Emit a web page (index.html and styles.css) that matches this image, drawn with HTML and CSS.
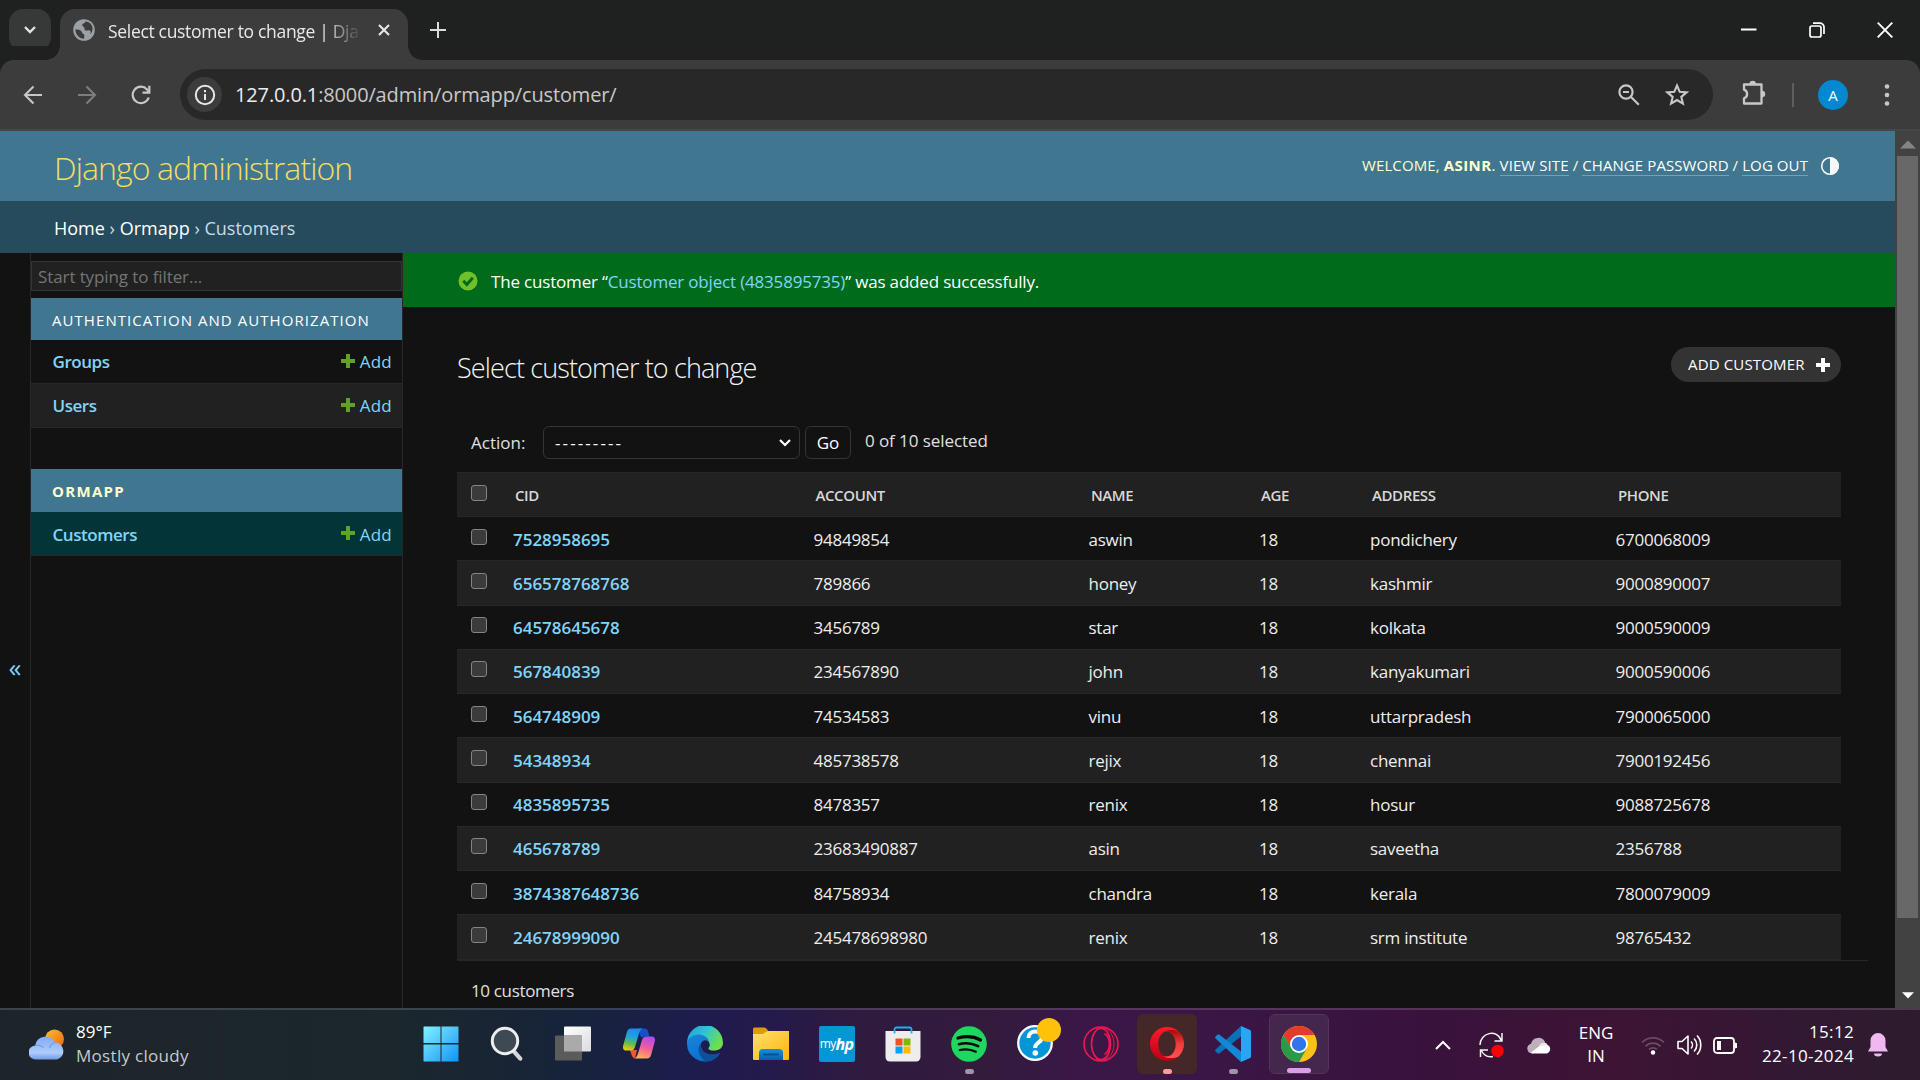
FILE: index.html
```
<!DOCTYPE html>
<html lang="en">
<head>
<meta charset="utf-8">
<title>Select customer to change | Django site admin</title>
<link rel="stylesheet" href="styles.css">
</head>
<body>
<div class="screen">
  <header class="tabstrip">
    <button class="tab-search"><svg width="14" height="10" viewBox="0 0 14 10"><path d="M2 2l5 5 5-5" fill="none" stroke="#e3e3e3" stroke-width="2.4"/></svg></button>
    <div class="tab">
      <svg class="globe" width="22" height="22" viewBox="0 0 22 22"><circle cx="11" cy="11" r="10.8" fill="#9aa0a6"/><path d="M2.4 10.5c2.400 0 4.400.3 5.600 1.300 1.300 1.200.7 2.600 2.200 3.100 1.500.4 1.200 1.700.8 4.800C6.500 19.600 2.500 16 2.400 10.500zM12.500 2.500c-.4 2-2.600 1.700-3.200 3-.5 1.400 1 1.700 1.900 2.900.7 1.100-.2 2.500 1.300 3 1.500.6 2.700-.4 4.200 0 1.400.5 1.100 1.900.5 3.700 2-1.700 2.700-4.600 2.200-7.200-.9-3-3.500-5.300-6.900-5.400z" fill="#3c3c3c"/></svg>
      <span class="tab-title">Select customer to change | Dja</span>
      <svg width="12" height="12" viewBox="0 0 12 12"><path d="M1 1l10 10M11 1L1 11" stroke="#e8e8e8" stroke-width="2.100"/></svg>
    </div>
    <svg class="new-tab" width="16" height="16" viewBox="0 0 16 16"><path d="M8 0v16M0 8h16" stroke="#dcdcdc" stroke-width="2"/></svg>
    <div class="window-controls">
      <svg width="16" height="16" viewBox="0 0 16 16"><path d="M0 7.500h15.500" stroke="#fff" stroke-width="2"/></svg>
      <svg width="16" height="16" viewBox="0 0 16 16" fill="none" stroke="#fff" stroke-width="1.700"><rect x="1" y="4" width="11" height="11" rx="2"/><path d="M4 1.200h7a4 4 0 0 1 4 4V12"/></svg>
      <svg width="16" height="16" viewBox="0 0 16 16"><path d="M.7.7l14.600 14.600M15.300.7L.7 15.300" stroke="#fff" stroke-width="1.900"/></svg>
    </div>
  </header>

  <div class="toolbar">
    <svg class="back" width="20" height="20" viewBox="0 0 20 20" fill="none" stroke="#c7c7c7" stroke-width="2.100"><path d="M19 10H2.500M10.500 1.500L2 10l8.500 8.500"/></svg>
    <svg class="forward" width="20" height="20" viewBox="0 0 20 20" fill="none" stroke="#7d7d7d" stroke-width="2.100"><path d="M1 10h16.500M9.500 1.500L18 10l-8.500 8.500"/></svg>
    <svg class="reload" width="20" height="20" viewBox="0 0 20 20" fill="none" stroke="#c7c7c7" stroke-width="2.200"><path d="M17.700 12.500A8.200 8.200 0 1 1 16 4.400l2.200 2.800"/><path d="M18.300.8v6.800h-6.800"/></svg>
    <div class="omnibox">
      <span class="site-info"><svg width="22" height="22" viewBox="0 0 22 22"><circle cx="11" cy="11" r="9.200" fill="none" stroke="#e6e6e6" stroke-width="2"/><path d="M11 10v6M11 6v2.200" stroke="#e6e6e6" stroke-width="2"/></svg></span>
      <span class="url"><b>127.0.0.1</b>:8000/admin/ormapp/customer/</span>
      <svg class="zoom" width="22" height="22" viewBox="0 0 22 22" fill="none" stroke="#c7c7c7" stroke-width="2.200"><circle cx="8" cy="8" r="6.600"/><path d="M12.800 12.800l8 8M5 8h6"/></svg>
      <svg class="star" width="24" height="23" viewBox="0 0 24 23"><path d="M12 2.500l2.700 6.300 6.800.6-5.200 4.500 1.600 6.700-5.900-3.600-5.900 3.600 1.600-6.700-5.200-4.500 6.800-.6z" fill="none" stroke="#c7c7c7" stroke-width="2.100"/></svg>
    </div>
    <svg class="puzzle" width="26" height="26" viewBox="0 0 26 26"><path d="M3 4.500h17.500V23.500H3v-5.200a4.600 4.600 0 0 0 0-8.700z" fill="none" stroke="#c7c7c7" stroke-width="2.300" stroke-linejoin="round"/><path d="M8.500 4a3.200 3.200 0 0 1 6.400 0zM21 10.800a3.200 3.200 0 0 1 0 6.400z" fill="#c7c7c7"/></svg>
    <span class="divider"></span>
    <span class="avatar">A</span>
    <svg class="menu" width="6" height="26" viewBox="0 0 6 26" fill="#c7c7c7"><circle cx="3" cy="4.500" r="2.300"/><circle cx="3" cy="13" r="2.300"/><circle cx="3" cy="21.500" r="2.300"/></svg>
  </div>

  <div class="viewport">
    <div class="admin">
      <div class="admin-header">
        <h1 class="site-name">Django administration</h1>
        <div class="user-tools"><span>WELCOME, <strong>ASINR</strong>. <a>VIEW SITE</a> / <a>CHANGE PASSWORD</a> / <a>LOG OUT</a></span>
          <svg width="20" height="20" viewBox="0 0 20 20"><circle cx="10" cy="10" r="8.300" fill="none" stroke="#f7f7f7" stroke-width="1.600"/><path d="M10 1a9 9 0 0 1 0 18z" fill="#f7f7f7"/></svg>
        </div>
      </div>
      <nav class="breadcrumbs"><a>Home</a> › <a>Ormapp</a> › Customers</nav>
      <div class="main">
        <button class="sidebar-toggle">«</button>
        <aside class="sidebar">
          <input class="filter" placeholder="Start typing to filter…">
          <div class="module">
            <div class="caption">AUTHENTICATION AND AUTHORIZATION</div>
            <div class="model"><b>Groups</b><a><svg class="plus" width="14" height="14" viewBox="0 0 14 14"><path d="M5 0h4v5h5v4H9v5H5V9H0V5h5z"/></svg>Add</a></div>
            <div class="model alt"><b>Users</b><a><svg class="plus" width="14" height="14" viewBox="0 0 14 14"><path d="M5 0h4v5h5v4H9v5H5V9H0V5h5z"/></svg>Add</a></div>
          </div>
          <div class="module">
            <div class="caption current">ORMAPP</div>
            <div class="model current"><b>Customers</b><a><svg class="plus" width="14" height="14" viewBox="0 0 14 14"><path d="M5 0h4v5h5v4H9v5H5V9H0V5h5z"/></svg>Add</a></div>
          </div>
        </aside>
        <section class="content">
          <div class="message">
            <svg width="20" height="20" viewBox="0 0 20 20"><circle cx="10" cy="10" r="9.500" fill="#70bf2b"/><path d="M5.300 9.700l3.500 3.800 6-6.800" fill="none" stroke="#006b1b" stroke-width="2.900"/></svg>
            <span>The customer “<a>Customer object (4835895735)</a>” was added successfully.</span>
          </div>
          <div class="title-row">
            <h2>Select customer to change</h2>
            <a class="add-button">ADD CUSTOMER<svg width="14" height="14" viewBox="0 0 14 14"><path d="M5 0h4v5h5v4H9v5H5V9H0V5h5z" fill="#fff"/></svg></a>
          </div>
          <div class="actions">
            <label>Action:</label>
            <span class="select">---------<svg width="12" height="8" viewBox="0 0 12 8"><path d="M1 1l5 5 5-5" fill="none" stroke="#fff" stroke-width="2.200"/></svg></span>
            <button class="go">Go</button>
            <span class="counter">0 of 10 selected</span>
          </div>
          <div class="table">
            <div class="row head"><i class="check"></i><span>CID</span><span>ACCOUNT</span><span>NAME</span><span>AGE</span><span>ADDRESS</span><span>PHONE</span></div>
            <div class="row"><i class="check"></i><a>7528958695</a><span>94849854</span><span>aswin</span><span>18</span><span>pondichery</span><span>6700068009</span></div>
            <div class="row"><i class="check"></i><a>656578768768</a><span>789866</span><span>honey</span><span>18</span><span>kashmir</span><span>9000890007</span></div>
            <div class="row"><i class="check"></i><a>64578645678</a><span>3456789</span><span>star</span><span>18</span><span>kolkata</span><span>9000590009</span></div>
            <div class="row"><i class="check"></i><a>567840839</a><span>234567890</span><span>john</span><span>18</span><span>kanyakumari</span><span>9000590006</span></div>
            <div class="row"><i class="check"></i><a>564748909</a><span>74534583</span><span>vinu</span><span>18</span><span>uttarpradesh</span><span>7900065000</span></div>
            <div class="row"><i class="check"></i><a>54348934</a><span>485738578</span><span>rejix</span><span>18</span><span>chennai</span><span>7900192456</span></div>
            <div class="row"><i class="check"></i><a>4835895735</a><span>8478357</span><span>renix</span><span>18</span><span>hosur</span><span>9088725678</span></div>
            <div class="row"><i class="check"></i><a>465678789</a><span>23683490887</span><span>asin</span><span>18</span><span>saveetha</span><span>2356788</span></div>
            <div class="row"><i class="check"></i><a>3874387648736</a><span>84758934</span><span>chandra</span><span>18</span><span>kerala</span><span>7800079009</span></div>
            <div class="row"><i class="check"></i><a>24678999090</a><span>245478698980</span><span>renix</span><span>18</span><span>srm institute</span><span>98765432</span></div>
          </div>
          <div class="paginator">10 customers</div>
        </section>
      </div>
    </div>
    <div class="scrollbar">
      <svg width="16" height="9" viewBox="0 0 16 9"><path d="M0 8.500L8 .5l8 8z" fill="#858585"/></svg>
      <span class="thumb"></span>
      <svg class="down" width="12" height="7" viewBox="0 0 12 7"><path d="M0 .3h12L6 6.600z" fill="#fff"/></svg>
    </div>
  </div>

  <footer class="taskbar">
    <div class="weather">
      <svg width="36" height="32" viewBox="0 0 36 32"><defs><linearGradient id="sun" x1="0" y1="0" x2="1" y2="1"><stop offset="0" stop-color="#f8bd32"/><stop offset="1" stop-color="#f0660c"/></linearGradient><linearGradient id="cloud" x1="0" y1="0" x2="0" y2="1"><stop offset="0" stop-color="#83a9f2"/><stop offset=".7" stop-color="#aecdfa"/><stop offset="1" stop-color="#6f9bea"/></linearGradient></defs><circle cx="25.500" cy="10" r="9.500" fill="url(#sun)"/><path d="M7 30.500a7 7 0 0 1-.8-14A10.500 10.500 0 0 1 26 13.600a8.600 8.600 0 0 1 2 16.900z" fill="url(#cloud)"/><path d="M6.500 16.500c3-.8 6 .2 8 2.200M20.500 19c1-3.500 3-5.200 6-5.500" fill="none" stroke="#7499e2" stroke-width="1.200"/></svg>
      <div class="stack"><span>89°F</span><span class="muted">Mostly cloudy</span></div>
    </div>
    <div class="apps">
      <div class="app"><svg width="36" height="36" viewBox="0 0 36 36"><defs><linearGradient id="win" gradientUnits="userSpaceOnUse" x1="0" y1="0" x2="36" y2="36"><stop offset="0" stop-color="#80f4ff"/><stop offset=".5" stop-color="#4cc2fb"/><stop offset="1" stop-color="#0a93f8"/></linearGradient></defs><path d="M1 .5h16.500V17H.5V1zM18.500.5H35l.5.5v16h-17zM.5 18.500h17v17H1l-.5-.5zM18.500 18.500h17V35l-.5.5H18.500z" fill="url(#win)"/></svg></div>
      <div class="app"><svg width="36" height="36" viewBox="0 0 36 36"><path d="M24.500 25l6.800 7.600" stroke="#d3d5d8" stroke-width="4.200" stroke-linecap="round"/><circle cx="16" cy="15" r="12.700" fill="#3d4953" stroke="#eceeef" stroke-width="3"/></svg></div>
      <div class="app"><svg width="36" height="36" viewBox="0 0 36 36"><defs><linearGradient id="tv" x1="0" y1="0" x2="1" y2="1"><stop offset="0" stop-color="#fff"/><stop offset="1" stop-color="#dcdcdc"/></linearGradient></defs><rect x="9" y=".5" width="27" height="25" rx="1" fill="url(#tv)"/><rect y="9.500" width="27" height="25" rx="1" fill="#5b5b5b"/><path d="M9 9.500h18v16H9z" fill="#aaa"/></svg></div>
      <div class="app"><svg width="36" height="36" viewBox="0 0 36 36"><defs><linearGradient id="cpa" x1=".3" y1="0" x2=".1" y2="1"><stop offset="0" stop-color="#1d8cf0"/><stop offset=".35" stop-color="#20a5d8"/><stop offset=".65" stop-color="#67b84d"/><stop offset="1" stop-color="#ffd000"/></linearGradient><linearGradient id="cpb" x1=".7" y1="0" x2=".4" y2="1"><stop offset="0" stop-color="#a94df3"/><stop offset=".5" stop-color="#ee5c9d"/><stop offset="1" stop-color="#ffad55"/></linearGradient></defs><path d="M17 2.500h6.500c2 0 3 1 3.600 3l1.300 5H23l-3 1z" fill="#1551c8"/><path d="M9 24h7l-2 8.500c-2-.5-3-2-3.500-4z" fill="#f4552f"/><path d="M10 2.500h11.500c-2 1-3 3-3.800 6L14 21c-.8 2.500-2 3.500-4.500 3.500h-4c-3 0-4-2-3.300-5L5.800 6.500C6.500 4 7.700 2.500 10 2.500z" fill="url(#cpa)"/><path d="M26 32.500H13.500c2-1 3-3 3.800-6L21 14c.8-2.500 2-3.500 4.500-3.500h5c3 0 4 2 3.300 5l-3.600 13c-.7 2.500-1.900 4-4.200 4z" fill="url(#cpb)"/></svg></div>
      <div class="app"><svg width="36" height="36" viewBox="0 0 36 36"><defs><linearGradient id="ea" x1="0" y1="0" x2="1" y2=".5"><stop offset="0" stop-color="#209ad8"/><stop offset=".5" stop-color="#2fc3d6"/><stop offset="1" stop-color="#6fe04a"/></linearGradient><linearGradient id="eb" x1="0" y1="0" x2=".5" y2="1"><stop offset="0" stop-color="#1a86d8"/><stop offset="1" stop-color="#0b6fd0"/></linearGradient></defs><path d="M0 17A18 18 0 0 1 36 17c0 5-4 7.500-9 7.500-4 0-6-1-5.500-2.500 2-2 1.500-5-.5-7C17 10 5 10 0 17z" fill="url(#ea)"/><path d="M0 17C1 12 6 8.500 11.500 8.500c6 0 10.500 4 11 8.500-2-4-7.500-3.500-8.500 1-1 6 4 12 13 15A18 18 0 0 1 0 17z" fill="url(#eb)"/><path d="M14 17c-5 6-2 14 5 18.500C26 36 31 31 33 27.500c.3-.8-.3-1-1-.6-7 3-15 1-17.500-4.400-.8-1.800-.9-4-.5-5.500z" fill="#0d509c"/></svg></div>
      <div class="app"><svg width="36" height="36" viewBox="0 0 36 36"><defs><linearGradient id="fo" x1="0" y1="0" x2="1" y2="1"><stop offset="0" stop-color="#ffe06c"/><stop offset="1" stop-color="#fdb50d"/></linearGradient><linearGradient id="fb" x1="0" y1="0" x2="0" y2="1"><stop offset="0" stop-color="#1290e0"/><stop offset="1" stop-color="#0860ac"/></linearGradient></defs><path d="M0 3a1.500 1.500 0 0 1 1.500-1.500H11c1.500 0 2.500 1 4 3L13 8H0z" fill="#dd9c05"/><path d="M0 8h9c3 0 3.500-3 6-3h21v28a1 1 0 0 1-1 1H1a1 1 0 0 1-1-1z" fill="url(#fo)"/><path d="M6 34V27a4 4 0 0 1 4-4h16a4 4 0 0 1 4 4v7z" fill="url(#fb)"/><path d="M11 28.500h14" stroke="#064f91" stroke-width="1.800" stroke-linecap="round"/></svg></div>
      <div class="app"><span class="myhp"><span class="my">my</span><b>hp</b></span></div>
      <div class="app"><svg width="36" height="36" viewBox="0 0 36 36"><path d="M9.500 7V3.500a2 2 0 0 1 2-2h13a2 2 0 0 1 2 2V7" fill="none" stroke="#22aef2" stroke-width="1.800"/><path d="M.5 5h35v26a4.500 4.500 0 0 1-4.500 4.500H5A4.500 4.500 0 0 1 .5 31z" fill="#ededed"/><path d="M9.500 5v2.500M26.500 5v2.500" stroke="#22aef2" stroke-width="1.800"/><path d="M10.500 12.500h7v7h-7z" fill="#f25022"/><path d="M18.500 12.500h7v7h-7z" fill="#7fba00"/><path d="M10.500 20.500h7v7h-7z" fill="#00a4ef"/><path d="M18.500 20.500h7v7h-7z" fill="#ffb900"/></svg></div>
      <div class="app"><svg width="36" height="36" viewBox="0 0 36 36"><circle cx="18" cy="18" r="17.800" fill="#1ed760"/><g fill="none" stroke="#090909" stroke-linecap="round"><path d="M7 12c7.500-2 16-1.500 22.500 2" stroke-width="3.200"/><path d="M8 18.200c6.500-1.700 13.500-.9 19.200 2" stroke-width="2.600"/><path d="M8.800 24c5.500-1.300 11.200-.7 16 1.700" stroke-width="2.200"/></g></svg><i class="dot"></i></div>
      <div class="app"><svg class="help" width="46" height="46" viewBox="0 0 46 46"><circle cx="18" cy="27" r="16.800" fill="#0596d8" stroke="#fff" stroke-width="2.200"/><path d="M11.500 22c0-9 13.500-8.500 13.500-.5 0 5-7 5-7 10.500" fill="none" stroke="#fff" stroke-width="4"/><circle cx="18.300" cy="37" r="2.800" fill="#fff"/><circle cx="32" cy="14" r="12" fill="#ffc20a"/></svg></div>
      <div class="app"><svg width="36" height="36" viewBox="0 0 36 36" fill="none" stroke="#ee174e" stroke-width="1.600"><circle cx="18" cy="18" r="17"/><ellipse cx="18" cy="18" rx="9.500" ry="15.500"/><path d="M21.500 7.500c6.500 4 6.500 17 0 21"/><path d="M13 2.500C24-1 31 8 31 18S24 37 13 33.500" stroke-width="1"/></svg></div>
      <div class="app running-alert"><svg width="36" height="36" viewBox="0 0 36 36"><defs><linearGradient id="oa" x1="0" y1="0" x2="0" y2="1"><stop offset="0" stop-color="#ff1b2d"/><stop offset="1" stop-color="#b80014"/></linearGradient><linearGradient id="ob" x1="0" y1="0" x2="0" y2="1"><stop offset="0" stop-color="#a80808"/><stop offset=".5" stop-color="#ef3d3d"/><stop offset="1" stop-color="#ff5252"/></linearGradient></defs><path fill-rule="evenodd" d="M18 1a17 17 0 1 0 0 34 17 17 0 0 0 0-34zm0 4.500c5 0 8.800 5.500 8.800 12.500S23 30.500 18 30.500 9.200 25 9.200 18 13 5.500 18 5.500z" fill="url(#oa)"/><path d="M13 6.800C17 3.500 24 3 29.500 5.500a17 17 0 0 1 0 25C24 33 17 32.500 13 29.200c7.500 4.500 13.800-2.500 13.800-11.200S20.500 2.300 13 6.800z" fill="url(#ob)"/></svg><i class="dot pink"></i></div>
      <div class="app"><svg width="36" height="36" viewBox="0 0 36 36"><path d="M26 0v10.500L4.500 27.200a1.500 1.500 0 0 1-2 0L.6 25.500a1.400 1.400 0 0 1 0-2z" fill="#0a72b8"/><path d="M26 36V25.500L4.500 8.800a1.500 1.500 0 0 0-2 0L.6 10.500a1.400 1.400 0 0 0 0 2z" fill="#1389d6"/><path d="M26 0l9 4a1.500 1.500 0 0 1 1 1.500v25a1.500 1.500 0 0 1-1 1.500l-9 4z" fill="#27a7f3"/></svg><i class="dot"></i></div>
      <div class="app active"><svg width="36" height="36" viewBox="0 0 36 36"><circle cx="18" cy="18" r="18" fill="#fbc116"/><path d="M2.400 9A18 18 0 0 1 33.600 9H18v9l-8 4.500z" fill="#e33b2e"/><path d="M2.400 9A18 18 0 0 0 18 36l7.800-13.500L18 18l-7.800 4.500z" fill="#2a9a47"/><circle cx="18" cy="18" r="9" fill="#fff"/><circle cx="18" cy="18" r="7.200" fill="#2f76ea"/></svg><i class="dot wide"></i></div>
    </div>
    <div class="tray">
      <svg class="chev" width="16" height="10" viewBox="0 0 16 10"><path d="M1 9l7-7 7 7" fill="none" stroke="#fff" stroke-width="2"/></svg>
      <svg class="sync" width="25" height="26" viewBox="0 0 25 26" fill="none" stroke="#f5f5f5" stroke-width="1.500"><path d="M1 13C1 1 18-4 22.500 9M23 1v8h-7.500M1.500 25v-7h7.500M2 18c2.500 5 7 7.500 12 6.500"/><circle cx="18.500" cy="19" r="6.200" fill="#fe0000" stroke="none"/></svg>
      <svg class="cloud" width="24" height="17" viewBox="0 0 24 17"><path d="M5 16.500A5 5 0 0 1 4 6.700 7.500 7.500 0 0 1 18 5l-2 6z" fill="#bdb0bb"/><path d="M4 15.500L15 7c3-2.500 5-.5 5.500 1A4.500 4.500 0 0 1 19.500 16.500H5z" fill="#fff"/><path d="M12 9.500c1-4 6-5 8-1.500" fill="#e9e4e8"/></svg>
      <div class="stack lang"><span>ENG</span><span>IN</span></div>
      <svg class="wifi" width="24" height="19" viewBox="0 0 24 19" fill="none" stroke="#6c4b63" stroke-width="1.700"><path d="M1 6.500a15.500 15.500 0 0 1 22 0M4.500 10.300a10.500 10.500 0 0 1 15 0M8 13.500a5.800 5.800 0 0 1 8 0"/><circle cx="12" cy="16.500" r="2.200" fill="#fff" stroke="none"/></svg>
      <svg class="volume" width="25" height="22" viewBox="0 0 25 22" fill="none" stroke="#fff" stroke-width="1.600"><path d="M1 7.500h4L11 2v18l-6-5.500H1z" stroke-linejoin="round"/><path d="M14 7.500a5 5 0 0 1 0 7M17 4.500a9 9 0 0 1 0 13M20 1.500c5 5 5 14 0 19"/></svg>
      <svg class="battery" width="24" height="17" viewBox="0 0 24 17"><rect x="1" y="1" width="20" height="15" rx="3" fill="none" stroke="#fff" stroke-width="1.800"/><path d="M4 4h4v9H4z" fill="#fff"/><path d="M22 6a2.500 2.500 0 0 1 0 5z" fill="#fff" stroke="#fff"/></svg>
      <div class="stack clock"><span>15:12</span><span>22-10-2024</span></div>
      <svg class="bell" width="20" height="24" viewBox="0 0 20 24" fill="#efb9f0"><path d="M10 0a7.500 7.500 0 0 1 7.500 7.500V14l2.500 4.500H0L2.500 14V7.500A7.500 7.500 0 0 1 10 0zM6 20.500h8a4 3 0 0 1-8 0z"/></svg>
    </div>
  </footer>
</div>
</body>
</html>
```
FILE: styles.css
```
* { box-sizing: border-box; }
body { margin: 0; background: #121212; font-family: "Open Sans", "Noto Sans", sans-serif; }
svg { display: block; flex: none; }
button { font-family: inherit; padding: 0; border: 0; background: none; }
h1, h2 { margin: 0; }

.screen { width: 1920px; height: 1080px; overflow: hidden; display: flex; flex-direction: column; color: #eee; }

/* Browser tab strip */
.tabstrip { height: 60px; flex: none; background: #1f2120; display: flex; align-items: flex-start; }
.tab-search { width: 42px; height: 42px; margin: 9px 9px 0; border-radius: 14px; background: #373938; display: flex; align-items: center; justify-content: center; }
.tab { position: relative; width: 348px; height: 51px; margin-top: 9px; padding: 0 18px 9px 13px; border-radius: 15px 15px 0 0; background: #3c3c3c; display: flex; align-items: center; }
.tab::before, .tab::after { content: ""; position: absolute; bottom: 0; width: 14px; height: 14px; }
.tab::before { left: -14px; background: radial-gradient(circle at 0 0, transparent 13.5px, #3c3c3c 14px); }
.tab::after { right: -14px; background: radial-gradient(circle at 100% 0, transparent 13.5px, #3c3c3c 14px); }
.tab-title { width: 256px; margin-left: 13px; padding-top: 2px; margin-right: auto; white-space: nowrap; font-size: 17.5px; letter-spacing: -.32px; color: #e8e8e8; -webkit-mask-image: linear-gradient(90deg, #000 215px, transparent 254px); mask-image: linear-gradient(90deg, #000 215px, transparent 254px); }
.new-tab { margin: 22px 0 0 22px; }
.window-controls { display: flex; gap: 52px; margin: 22px 27px 0 auto; }

/* Browser toolbar */
.toolbar { height: 71px; flex: none; background: #3c3c3c; border-bottom: 2px solid #474747; border-radius: 14px 14px 0 0; box-shadow: 0 -14px 0 0 #1f2120; clip-path: none; display: flex; align-items: center; }
.back { margin-left: 23px; }
.forward { margin-left: 34px; }
.reload { margin-left: 34px; }
.omnibox { width: 1533px; height: 51px; margin-left: 29px; padding: 0 24px 0 7px; border-radius: 26px; background: #282828; display: flex; align-items: center; }
.site-info { width: 35px; height: 35px; border-radius: 50%; background: #3c3c3c; display: flex; align-items: center; justify-content: center; }
.url { margin-left: 13px; font-size: 20px; letter-spacing: -.14px; color: #c8c8c8; }
.url b { font-weight: 400; color: #ececec; }
.zoom { margin-left: auto; }
.star { margin-left: 25px; }
.puzzle { margin-left: 28px; margin-top: -4px; }
.divider { width: 2px; height: 24px; margin-left: 25px; background: #5e5e5e; }
.avatar { width: 30px; height: 30px; margin-left: 24px; border-radius: 50%; background: #0288d1; color: #fff; font: 15px/31px "Open Sans", sans-serif; text-align: center; }
.menu { margin-left: 36px; }

/* Page area */
.viewport { height: 877px; flex: none; display: flex; }
.admin { width: 1895px; display: flex; flex-direction: column; background: #121212; }
.admin-header { height: 70px; flex: none; padding: 0 55px 0 54px; background: #417690; display: flex; align-items: center; justify-content: space-between; }
.site-name { padding-top: 3px; font-size: 32px; font-weight: 300; letter-spacing: -.92px; color: #f5dd5d; }
.user-tools { display: flex; align-items: center; gap: 12px; font-size: 15px; color: #ffc; white-space: nowrap; letter-spacing: .09px; }
.user-tools span { padding-bottom: 1px; }
.user-tools strong { letter-spacing: .45px; }
.user-tools a { display: inline-block; line-height: 19px; color: #fff; border-bottom: 1px solid #7a9fb2; }
.breadcrumbs { height: 52px; flex: none; padding: 2px 54px 0; background: #264b5d; color: #c4dce8; font-size: 18px; line-height: 50px; letter-spacing: 0; }
.breadcrumbs a { color: #fff; }
.main { flex: 1; min-height: 0; display: flex; }
.sidebar-toggle { width: 30px; height: 828px; align-self: flex-start; color: #81d4fa; font-size: 26px; }
.sidebar { width: 373px; padding-top: 8px; border-left: 1px solid #272727; border-right: 1px solid #272727; display: flex; flex-direction: column; }
.filter { width: 100%; height: 30px; flex: none; margin-bottom: 7px; padding: 0 6px; border: 1px solid #353535; background: #212121; color: #eee; font: 17px "Open Sans", sans-serif; letter-spacing: -.1px; }
.filter::placeholder { color: #757575; }
.module { margin-bottom: 41px; }
.caption { height: 42px; padding: 1px 21px 0; background: #417690; color: #fff; font-size: 15px; line-height: 42px; letter-spacing: 1.060px; white-space: nowrap; }
.caption.current { height: 43px; color: #ffc; font-weight: 700; letter-spacing: 1.300px; }
.model { height: 44px; padding: 0 10px 0 21.500px; border-bottom: 1px solid #272727; display: flex; align-items: center; justify-content: space-between; font-size: 17px; color: #81d4fa; }
.model.alt { background: #212121; }
.model.current { background: #033538; padding-top: 1px; }
.model b { font-weight: 600; letter-spacing: -.45px; }
.model a { display: flex; align-items: center; gap: 5px; letter-spacing: .25px; }
.plus { fill: #5fa225; margin-top: -2px; }

/* Change list */
.content { flex: 1; min-width: 0; }
.message { height: 54px; padding: 1px 0 0 55px; background: #006b1b; display: flex; align-items: center; gap: 13px; font-size: 17px; letter-spacing: -.18px; color: #fff; }
.message span { padding-top: 1px; }
.message a { color: #81d4fa; }
.title-row { height: 75px; margin-top: 40px; padding: 0 54px 0 54px; display: flex; justify-content: space-between; align-items: flex-start; }
h2 { padding-top: 1px; font-size: 27px; line-height: 40px; font-weight: 300; letter-spacing: -.88px; color: #f2f2f2; }
.add-button { width: 170px; height: 35px; padding: 0 11px 0 17px; border-radius: 18px; background: #333; color: #fff; display: flex; align-items: center; justify-content: space-between; font-size: 15px; line-height: 33px; letter-spacing: .15px; white-space: nowrap; }
.actions { height: 46px; padding: 0 0 0 68px; margin-top: 4px; display: flex; align-items: flex-start; font-size: 17px; line-height: 34px; color: #e0e0e0; }
.actions label { width: 72px; }
.select { width: 257px; height: 33px; padding: 0 8px 0 11px; border: 1px solid #353535; border-radius: 6px; display: flex; align-items: center; justify-content: space-between; color: #fff; letter-spacing: 2.100px; }
.go { width: 46px; height: 33px; margin-left: 5px; border: 1px solid #353535; border-radius: 6px; color: #fff; font-size: 17px; }
.counter { margin-left: 14px; line-height: 29px; letter-spacing: -.08px; }
.table { width: 1384px; margin-left: 54px; }
.row { height: 44.250px; padding-top: 1px; display: grid; grid-template-columns: 46px 300.500px 275.500px 170px 111px 246px 1fr; align-items: center; border-bottom: 1px solid #272727; font-size: 17px; letter-spacing: -.25px; color: #eee; }
.row > span, .row > a { padding-left: 10px; }
.row > :nth-child(4), .row > :nth-child(7) { padding-left: 9.500px; }
.row a { font-weight: 600; letter-spacing: -.02px; color: #81d4fa; }
.row:nth-child(odd) { background: #212121; }
.row:nth-child(2n) { background: #121212; }
.row.head { height: 45px; border-top: 1px solid #272727; font-size: 15px; font-weight: 600; letter-spacing: -.4px; color: #d8d8d8; }
.row.head > span { padding-left: 12px; }
.check { width: 16px; height: 16px; margin: -5px 0 0 14px; border: 1px solid #858585; border-radius: 3px; background: #3b3b3b; }
.paginator { width: 1411px; margin-left: 54px; padding-left: 14px; border-top: 1px solid #272727; font-size: 17px; line-height: 60px; letter-spacing: -.35px; color: #e0e0e0; }

.scrollbar { width: 25px; background: #424242; display: flex; flex-direction: column; align-items: center; padding: 9px 0; }
.thumb { width: 21px; height: 762px; margin-top: 7px; background: #686868; }
.down { margin-top: auto; }

/* Windows taskbar */
.taskbar { height: 72px; flex: none; border-top: 2px solid rgba(255,255,255,.14); background: linear-gradient(90deg, #1d252a 0, #1b272d 400px, #17233a 570px, #1c1d4d 690px, #241a4b 770px, #2f1b3e 860px, #331b3c 990px, #3a1747 1080px, #3a1645 1240px, #39123c 1430px, #3d1434 1620px, #331833 1780px, #2d1c2d 1920px) border-box; display: grid; grid-template-columns: 407.500px 924px 1fr; align-items: center; }
.weather { padding: 0 0 0 29px; display: flex; align-items: center; gap: 11px; }
.stack { display: flex; flex-direction: column; padding-bottom: 2px; font-size: 17px; line-height: 24px; color: #fff; white-space: nowrap; }
.muted { color: #c7cacc; letter-spacing: .3px; }
.apps { display: grid; grid-template-columns: repeat(14, 66px); height: 70px; }
.app { position: relative; display: flex; align-items: center; justify-content: center; border-radius: 6px; margin: 4px 3px 6px; }
.running-alert { background: #442727; }
.active { background: #45264c; border: 1px solid #523559; }
.help { margin: -10px 0 0 10px; }
.dot { position: absolute; bottom: 0; left: 26px; width: 9px; height: 5px; border-radius: 3px; background: #a294a8; }
.dot.pink { background: #ff99a4; }
.dot.wide { left: 17px; width: 24px; background: #dc9ee6; }
.myhp { width: 36px; height: 36px; border-radius: 2px; background: #0596d6; color: #fff; display: flex; align-items: center; justify-content: center; font-size: 12px; letter-spacing: -.7px; line-height: 36px; }
.myhp b { font-size: 16px; font-style: italic; }
.tray { height: 70px; display: flex; align-items: center; }
.chev { margin-left: 103.500px; }
.sync { margin-left: 28px; }
.cloud { margin-left: 23px; }
.lang { width: 60px; margin-left: 15px; text-align: center; line-height: 23px; }
.wifi { margin-left: 15px; }
.volume { margin-left: 12px; }
.battery { margin-left: 11px; }
.clock { width: 100px; margin-left: 17px; text-align: right; letter-spacing: .33px; }
.bell { margin-left: 14px; }
```
